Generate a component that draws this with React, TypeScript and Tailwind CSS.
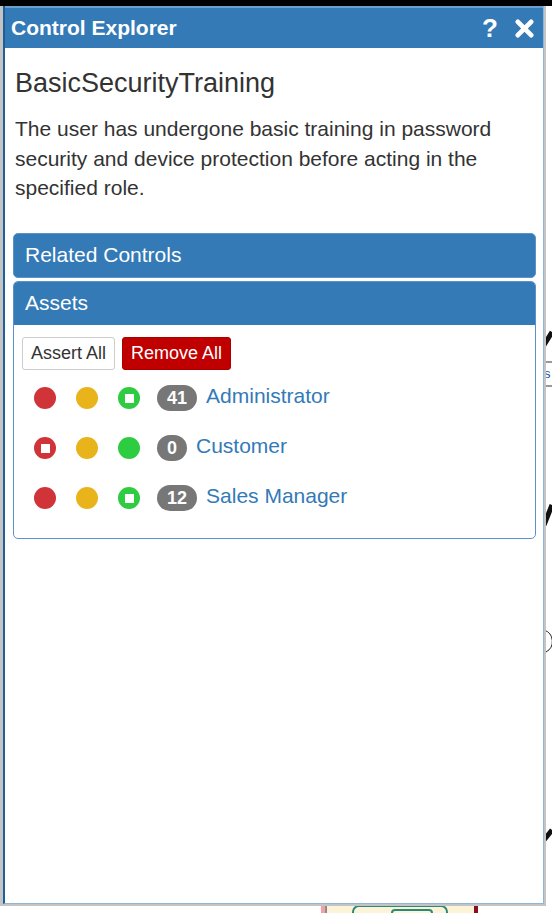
export default function App() {
  const assets = [
    { name: "Administrator", count: 41, marks: [false, false, true] },
    { name: "Customer", count: 0, marks: [true, false, false] },
    { name: "Sales Manager", count: 12, marks: [false, false, true] },
  ];
  const colors = ["bg-[#d13438]", "bg-[#e8b31b]", "bg-[#2ecc40]"];

  return (
    <div className="relative w-[552px] h-[913px] overflow-hidden bg-white font-['Liberation_Sans',Arial,sans-serif]">
      {/* background diagram bits */}
      <div className="absolute left-0 top-0 w-[552px] h-[6px] bg-black" />
      <svg className="absolute left-0 top-0" width="552" height="913">
        <path d="M544 345 L552 332" stroke="#111" strokeWidth="5" />
        <line x1="544" y1="362" x2="552" y2="362" stroke="#333" strokeWidth="1" />
        <line x1="544" y1="386" x2="552" y2="386" stroke="#333" strokeWidth="1" />
        <path d="M544 525 L552 505" stroke="#111" strokeWidth="5" />
        <path d="M544 630 A 12 12 0 0 1 546 652" stroke="#222" strokeWidth="1" fill="none" />
        <path d="M544 840 L552 830" stroke="#111" strokeWidth="5" />
        <rect x="326" y="904" width="150" height="12" fill="#fdf3d8" stroke="#222" />
        <rect x="353" y="906" width="94" height="12" rx="6" fill="none" stroke="#2a8a7a" strokeWidth="2" />
        <rect x="392" y="910" width="40" height="8" rx="3" fill="none" stroke="#2a8a7a" strokeWidth="2" />
        <rect x="321" y="904" width="4" height="9" fill="#f3a0a8" />
        <rect x="474" y="904" width="4" height="9" fill="#8a1020" />
      </svg>
      <span className="absolute left-[544px] top-[364px] text-[13px] text-[#1a55a0]">s</span>

      {/* window */}
      <div className="absolute left-0 top-[6px] w-[546px] h-[900px] bg-[#c4c4c4] pl-[3px] pb-[2px] pr-[2px]">
        <div className="h-full bg-white border-l-2 border-[#1f5f99] border-r border-b border-r-[#8fb5d8] border-b-[#8fb5d8] flex flex-col">
          <div className="h-[42px] bg-[#337ab7] border-t-2 border-[#6a9fd0] flex items-center justify-between pl-[6px] pr-[9px] text-white">
            <span className="text-[21px] font-bold">Control Explorer</span>
            <div className="flex items-center gap-[17px]">
              <span className="text-[26px] font-bold leading-none">?</span>
              <svg width="19" height="19" viewBox="0 0 20 20">
                <path d="M3 3 L17 17 M17 3 L3 17" stroke="#fff" strokeWidth="5" strokeLinecap="round" />
              </svg>
            </div>
          </div>

          <div className="px-[10px] pt-[19px]">
            <h1 className="text-[27px] leading-[32px] text-[#333]">BasicSecurityTraining</h1>
            <p className="mt-[15px] text-[21px] leading-[29.5px] text-[#333] pr-[20px]">
              The user has undergone basic training in password security and device protection before acting in the specified role.
            </p>

            <div className="mt-[30px] ml-[-2px] mr-[-3px] flex flex-col gap-[3px]">
              <div className="h-[45px] rounded-[5px] border border-[#5b93c9] bg-[#337ab7] flex items-center px-[11px]">
                <span className="text-[21px] text-white">Related Controls</span>
              </div>
              <div className="rounded-[5px] border border-[#5b93c9] overflow-hidden">
                <div className="h-[43px] bg-[#337ab7] flex items-center px-[11px]">
                  <span className="text-[21px] text-white">Assets</span>
                </div>
                <div className="px-[8px] pt-[12px] pb-[28px]">
                  <div className="flex gap-[7px]">
                    <button className="h-[33px] px-[8px] rounded-[3px] border border-[#ccc] bg-white text-[18px] text-[#333]">Assert All</button>
                    <button className="h-[33px] px-[8px] rounded-[3px] border border-[#a00] bg-[#c00000] text-[18px] text-white">Remove All</button>
                  </div>
                  <div className="mt-[17px] flex flex-col gap-[27px]">
                    {assets.map((a) => (
                      <div key={a.name} className="flex items-center h-[23px]">
                        <div className="flex items-center gap-[20px] pl-[12px]">
                          {a.marks.map((m, i) => (
                            <div key={i} className={`w-[22px] h-[22px] rounded-full flex items-center justify-center ${colors[i]}`}>
                              {m && <div className="w-[9px] h-[9px] bg-white" />}
                            </div>
                          ))}
                        </div>
                        <span className="ml-[17px] h-[26px] px-[10px] rounded-full bg-[#777] text-white text-[18px] font-bold flex items-center">{a.count}</span>
                        <span className="ml-[9px] text-[21px] text-[#337ab7] -mt-[4px]">{a.name}</span>
                      </div>
                    ))}
                  </div>
                </div>
              </div>
            </div>
          </div>
        </div>
      </div>
    </div>
  );
}
